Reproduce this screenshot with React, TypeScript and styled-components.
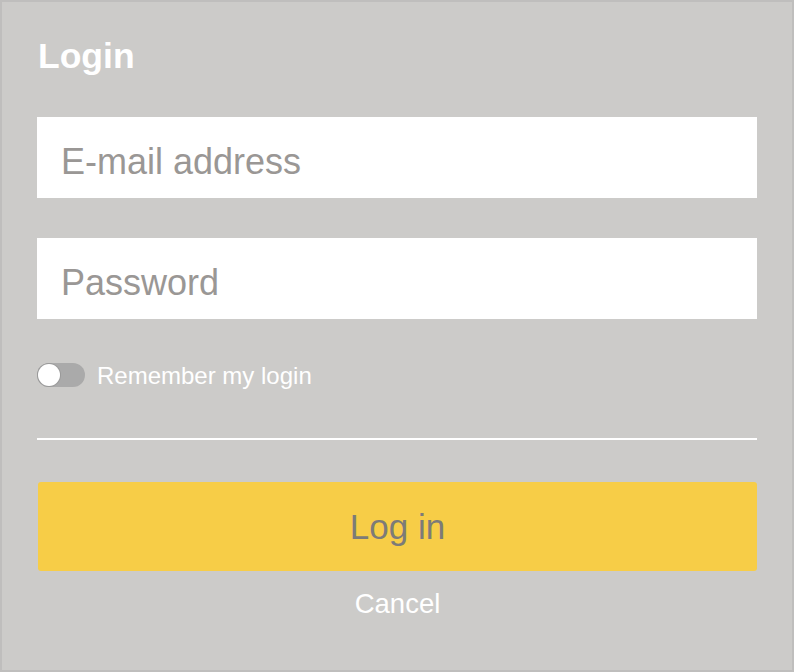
import React from "react";
import styled, { createGlobalStyle } from "styled-components";

const Global = createGlobalStyle`
  html, body { margin: 0; padding: 0; }
  body { font-family: "Liberation Sans", Arial, sans-serif; }
  * { box-sizing: border-box; }
`;

const Panel = styled.div`
  width: 794px;
  height: 672px;
  border: 2px solid #bfbebd;
  background: #cccbc9;
  padding: 37px 35px 0 35px;
  display: flex;
  flex-direction: column;
`;

const Title = styled.h1`
  margin: 0;
  font-size: 35.5px;
  line-height: 35px;
  font-weight: 700;
  color: #ffffff;
  padding-left: 1px;
`;

const Fields = styled.div`
  display: flex;
  flex-direction: column;
  gap: 40px;
  margin-top: 43px;
`;

const Field = styled.input`
  width: 720px;
  height: 81px;
  border: none;
  outline: none;
  background: #ffffff;
  padding: 8px 24px 0 24px;
  font-family: "Liberation Sans", Arial, sans-serif;
  font-size: 36px;
  color: #555;
  &::placeholder { color: #9a9795; }
`;

const RememberRow = styled.label`
  display: flex;
  align-items: center;
  gap: 12px;
  margin-top: 44px;
  height: 24px;
  cursor: pointer;
`;

const Track = styled.span`
  position: relative;
  width: 48px;
  height: 24px;
  border-radius: 12px;
  background: #aaaaaa;
  flex: none;
`;

const Knob = styled.span`
  position: absolute;
  left: 1px;
  top: 1px;
  width: 22px;
  height: 22px;
  border-radius: 50%;
  background: #ffffff;
  box-shadow: 0 0 0 1px #9a9a9a;
`;

const RememberText = styled.span`
  font-size: 24px;
  color: #ffffff;
  padding-top: 2px;
`;

const Divider = styled.hr`
  width: 720px;
  margin: 51px 0 0 0;
  border: none;
  height: 2px;
  background: #ffffff;
`;

const LoginButton = styled.button`
  margin: 42px 0 0 1px;
  width: 719px;
  height: 89px;
  border: none;
  border-radius: 3px;
  background: #f7cd47;
  color: #7d7b78;
  font-family: "Liberation Sans", Arial, sans-serif;
  font-size: 35px;
  padding: 0 0 0 0;
  cursor: pointer;
`;

const CancelButton = styled.button`
  align-self: center;
  margin-top: 17px;
  margin-left: 1px;
  border: none;
  background: transparent;
  color: #ffffff;
  font-family: "Liberation Sans", Arial, sans-serif;
  font-size: 27.5px;
  padding: 0;
  cursor: pointer;
`;

export default function App() {
  return (
    <>
      <Global />
      <Panel>
        <Title>Login</Title>
        <Fields>
          <Field type="email" placeholder="E-mail address" />
          <Field type="password" placeholder="Password" />
        </Fields>
        <RememberRow>
          <Track>
            <Knob />
          </Track>
          <RememberText>Remember my login</RememberText>
        </RememberRow>
        <Divider />
        <LoginButton>Log in</LoginButton>
        <CancelButton>Cancel</CancelButton>
      </Panel>
    </>
  );
}
